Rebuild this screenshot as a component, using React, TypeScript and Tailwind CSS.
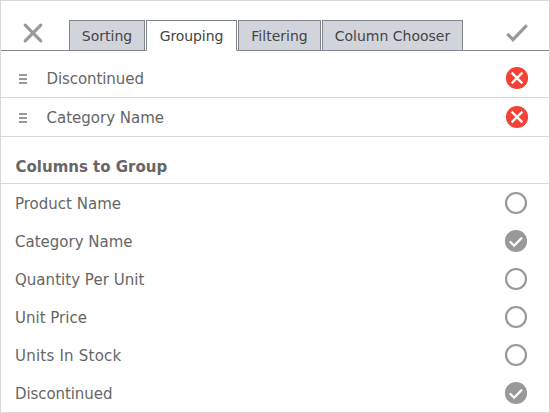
import React from "react";

const tabs = [
  { label: "Sorting", style: "w-[76px] bg-[#d1d5db]" },
  { label: "Grouping", style: "w-[91px] border-b-white bg-white tracking-[-0.1px]" },
  { label: "Filtering", style: "w-[83px] bg-[#d1d5db]" },
  { label: "Column Chooser", style: "w-[141px] bg-[#d1d5db]" },
];

const grouped = [
  { name: "Discontinued", tracking: "tracking-[-0.08px]" },
  { name: "Category Name", tracking: "tracking-[0px]" },
];

const columns = [
  { name: "Product Name", checked: false, tracking: "tracking-[0px]" },
  { name: "Category Name", checked: true, tracking: "tracking-[0px]" },
  { name: "Quantity Per Unit", checked: false, tracking: "tracking-[0.03px]" },
  { name: "Unit Price", checked: false, tracking: "tracking-[0px]" },
  { name: "Units In Stock", checked: false, tracking: "tracking-[0.22px]" },
  { name: "Discontinued", checked: true, tracking: "tracking-[-0.08px]" },
];

function Remove() {
  return (
    <svg width="24" height="24" viewBox="0 0 24 24" className="block">
      <circle cx="12" cy="12" r="11.1" fill="#f44336" />
      <path d="M6.6 6.6 17.4 17.4M17.4 6.6 6.6 17.4" stroke="#fff" strokeWidth="2.2" />
    </svg>
  );
}

function Mark({ checked }: { checked: boolean }) {
  return (
    <svg width="24" height="24" viewBox="0 0 24 24" className="block">
      {checked ? (
        <>
          <circle cx="12" cy="12" r="11.1" fill="#999" />
          <path d="m6.4 13 3.7 3.7 7.3-7.5" fill="none" stroke="#fff" strokeWidth="2.3" strokeLinecap="round" />
        </>
      ) : (
        <circle cx="12" cy="12" r="10" fill="#fff" stroke="#999" strokeWidth="2.2" />
      )}
    </svg>
  );
}

export default function App() {
  return (
    <div className="flex h-[413px] w-[550px] flex-col overflow-hidden border border-[#d9d9d9] bg-white font-['DejaVu_Sans',Verdana,sans-serif] text-[#666]">
      <header className="flex h-[50px] shrink-0 items-end border-b border-[#80858e] pl-[22px] pr-[20px]">
        <svg width="20" height="20" viewBox="0 0 20 20" className="mb-[7px] mr-[26px]">
          <path d="m2.2 2.2 15.6 15.6M17.8 2.2 2.2 17.8" stroke="#999" strokeWidth="3.1" strokeLinecap="round" />
        </svg>
        <nav className="-mb-px flex gap-px">
          {tabs.map((tab) => (
            <div
              key={tab.label}
              className={`flex h-[31px] items-center justify-center whitespace-nowrap border border-[#80858e] pt-[2px] text-[14px] leading-[27px] text-[#444] ${tab.style}`}
            >
              {tab.label}
            </div>
          ))}
        </nav>
        <svg width="24" height="20" viewBox="0 0 24 20" className="mb-[7px] ml-auto">
          <path d="m2.2 10.8 5.8 5.8L21.7 2.4" fill="none" stroke="#999" strokeWidth="3.2" />
        </svg>
      </header>
      {grouped.map(({ name, tracking }, i) => (
        <div key={name} className={`${i ? "h-[39px]" : "h-[47px] pt-[8px]"} flex shrink-0 items-center border-b border-[#d9d9d9] pl-[18px] pr-[20px]`}>
          <div className="flex w-[27.5px] flex-col gap-[2px] pt-[2px]">
            <i className="h-[2px] w-[8px] bg-[#999]" />
            <i className="h-[2px] w-[8px] bg-[#999]" />
            <i className="h-[2px] w-[8px] bg-[#999]" />
          </div>
          <span className={`flex-1 pt-[2px] text-[15px] leading-[20px] ${tracking}`}>{name}</span>
          <Remove />
        </div>
      ))}
      <h2 className="h-[47px] shrink-0 border-b border-[#d9d9d9] pl-[14.5px] pt-[20px] text-[15px] font-bold leading-[20px]">Columns to Group</h2>
      {columns.map(({ name, checked, tracking }) => (
        <div key={name} className="flex h-[38px] shrink-0 items-center pl-[14px] pr-[21px] text-[15px] leading-[20px]">
          <span className={`flex-1 pt-[2px] ${tracking}`}>{name}</span>
          <Mark checked={checked} />
        </div>
      ))}
    </div>
  );
}
